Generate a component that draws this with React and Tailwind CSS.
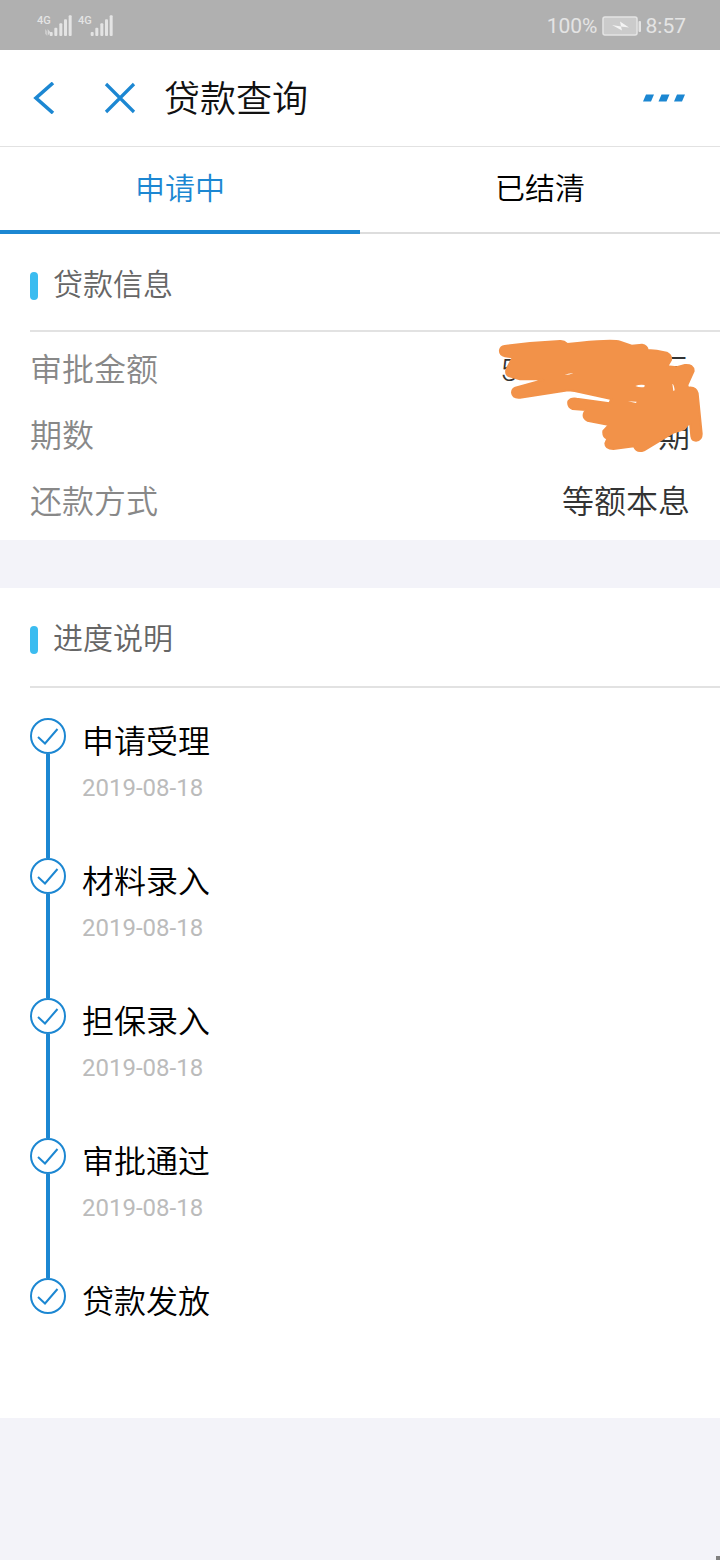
import { useState } from "react";

const loanTabs = ["申请中", "已结清"];

const steps = [
  { title: "申请受理", date: "2019-08-18" },
  { title: "材料录入", date: "2019-08-18" },
  { title: "担保录入", date: "2019-08-18" },
  { title: "审批通过", date: "2019-08-18" },
  { title: "贷款发放", date: "" },
];

function Signal({ active }) {
  return (
    <div className="flex items-start">
      <span className="w-3 font-['Roboto'] text-[11px] leading-3 font-medium">4G</span>
      <svg viewBox="0 0 81 66" className="-ml-1 h-[22px] w-[27px] shrink-0" fill="currentColor">
        {active && <path d="M1 42l4 6v14l-4-6zM8 42l8 10-8 10z" opacity="0.8" />}
        <rect x="14" y="51" width="9" height="12" rx="3" />
        <rect x="28" y="38" width="9" height="25" rx="3" />
        <rect x="43" y="25" width="9" height="38" rx="3" />
        <rect x="57" y="13" width="9" height="50" rx="3" />
        <rect x="71" y="1" width="9" height="62" rx="3" />
      </svg>
    </div>
  );
}

function StatusBar() {
  return (
    <div className="flex h-[50px] items-center justify-between bg-[#b0b0b0] pt-[2px] pr-[34px] pl-[37px] text-[#e4e4e4]">
      <div className="flex gap-[6px]">
        <Signal active />
        <Signal />
      </div>
      <div className="flex items-center gap-1 font-['Roboto'] text-[21px] leading-6 font-normal">
        <span>100%</span>
        <svg viewBox="0 0 40 20" className="h-5 w-10">
          <rect x="1" y="1" width="34" height="18" rx="2" fill="#cbcbcb" stroke="#e4e4e4" strokeWidth="1.5" />
          <path d="M10 9l9 1.500-1-5 9 6-8-1 1 4z" fill="#f4f4f4" />
          <rect x="36.500" y="5" width="2.500" height="11" rx="1" fill="#e4e4e4" />
        </svg>
        <span>8:57</span>
      </div>
    </div>
  );
}

function Header() {
  return (
    <header className="flex h-[97px] items-center border-b border-[#e2e2e2] pr-[34px] pl-8 text-[#1c87d2]">
      <button aria-label="返回" className="mr-12">
        <svg viewBox="0 0 24 32" className="h-8 w-6" fill="none" stroke="currentColor" strokeWidth="3.600">
          <path d="M21 1L4 16l17 15" />
        </svg>
      </button>
      <button aria-label="关闭" className="mr-7">
        <svg viewBox="0 0 32 32" className="h-8 w-8" fill="none" stroke="currentColor" strokeWidth="3.200">
          <path d="M2 2l28 28M30 2L2 30" />
        </svg>
      </button>
      <h1 className="pt-1 text-[36px] leading-[48px] text-[#111]">贷款查询</h1>
      <button aria-label="更多" className="ml-auto">
        <svg viewBox="0 0 44 8" className="h-2 w-11" fill="currentColor">
          <path d="M4 .5h8L9 7.500H1zM19.500 .5h8l-3 7h-8zM35 .5h8l-3 7h-8z" />
        </svg>
      </button>
    </header>
  );
}

function SectionTitle({ className, children }) {
  return (
    <div className={`ml-[30px] flex items-center gap-[15px] border-b-2 border-[#e2e2e2] pt-8 ${className}`}>
      <span className="h-7 w-2 rounded-full bg-[#3bbcf0]" />
      <h2 className="pb-[2px] text-[30px] leading-[38px] text-[#666]">{children}</h2>
    </div>
  );
}

function InfoRow({ label, children }) {
  return (
    <div className="flex h-[66px] items-center justify-between">
      <dt className="text-[#888]">{label}</dt>
      <dd className="text-[#333]">{children}</dd>
    </div>
  );
}

// orange marker strokes that hide the amount and the number of terms
function Scribble() {
  return (
    <svg
      viewBox="0 21 720 399"
      className="pointer-events-none absolute top-0 right-0 h-[133px] w-60"
      aria-hidden="true"
    >
      <path
        fill="#f29249"
        stroke="#f29249"
        strokeWidth="6"
        strokeLinejoin="round"
        d="M74 63L150 54L240 48Q252 47 262 57L300 53Q400 43 420 50L455 62L486 59Q502 62 503 75L530 77L560 83Q576 92 573 105L562 124L590 127L615 120Q640 118 641 138L622 180L624 188Q648 184 653 205L665 325Q666 346 648 347Q636 347 634 334L630 292L612 313L580 323L492 376Q470 384 462 364L400 372Q376 372 376 355L382 341Q368 335 370 318L384 303L384 299L322 287Q306 278 313 262L318 255L278 252Q262 246 265 229Q272 218 290 221L388 235L394 222L284 198L265 196L120 218Q98 220 96 203Q96 192 106 188L190 165L170 163L120 163L86 153Q76 148 79 134L98 97L75 94Q58 90 60 75Q62 65 74 63Z"
      />
      <path fill="#fff" d="M254 150q12-6 26-5-12 5-26 5zM466 183q14-6 28-3l-1 6q-14 2-27-3zM577 176q5 2 7 20l-4 2zM444 229l26 1-2 4z" />
    </svg>
  );
}

function Step({ title, date, last }) {
  return (
    <li className={last ? "flex gap-4" : "flex h-[140px] gap-4"}>
      <div className="flex flex-col items-center">
        <svg viewBox="0 0 36 36" className="h-9 w-9 shrink-0" fill="none" stroke="#1c87d2" strokeWidth="2">
          <circle cx="18" cy="18" r="17" />
          <path d="M8 19l7 6.500L27.500 11" />
        </svg>
        {!last && <span className="w-1 flex-1 bg-[#1c87d2]" />}
      </div>
      <div>
        <h3 className="text-[32px] leading-[48px] text-black">{title}</h3>
        {date && (
          <time dateTime={date} className="block font-['Roboto'] text-[24px] leading-[44px] font-normal text-[#bbb]">
            {date}
          </time>
        )}
      </div>
    </li>
  );
}

export default function App() {
  const [tab, setTab] = useState("申请中");

  return (
    <div className="relative min-h-screen bg-[#f3f3f9] font-['Roboto','Noto_Sans_CJK_SC',sans-serif] font-[350]">
      <StatusBar />
      <main>
        <div className="bg-white">
          <Header />
          <div role="tablist" className="flex h-[87px]">
            {loanTabs.map((name) => (
              <button
                key={name}
                role="tab"
                aria-selected={tab === name}
                onClick={() => setTab(name)}
                className={`flex-1 text-[30px] leading-10 ${
                  tab === name
                    ? "border-b-4 border-[#1c87d2] text-[#1c87d2]"
                    : "border-b-2 border-[#ddd] pb-[2px] text-black"
                }`}
              >
                {name}
              </button>
            ))}
          </div>

          <section>
            <SectionTitle className="pb-6">贷款信息</SectionTitle>
            <dl className="relative px-[30px] py-[5px] text-[32px] leading-[48px]">
              <InfoRow label="审批金额">
                <span className="flex w-[190px] justify-between">
                  <span>5</span>
                  <span>元</span>
                </span>
              </InfoRow>
              <InfoRow label="期数">期</InfoRow>
              <InfoRow label="还款方式">等额本息</InfoRow>
              <Scribble />
            </dl>
          </section>
        </div>

        <section className="mt-12 bg-white">
          <SectionTitle className="pb-[26px]">进度说明</SectionTitle>
          <ol className="px-[30px] pt-[30px] pb-[92px]">
            {steps.map((step, i) => (
              <Step key={step.title} {...step} last={i === steps.length - 1} />
            ))}
          </ol>
        </section>
      </main>
      <span className="absolute right-0 bottom-0 h-1 w-1 bg-[#808080]" />
    </div>
  );
}
